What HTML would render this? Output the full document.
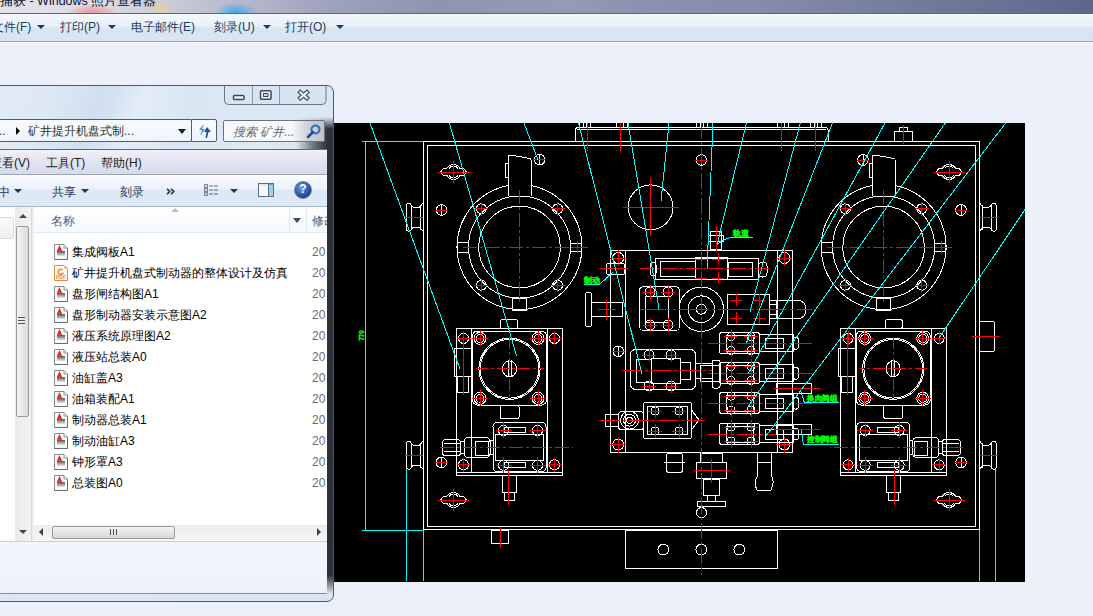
<!DOCTYPE html>
<html><head><meta charset="utf-8">
<style>
*{margin:0;padding:0;box-sizing:border-box}
html,body{width:1093px;height:616px;overflow:hidden}
body{position:relative;background:#ecf1f9;font-family:"Liberation Sans",sans-serif;font-size:12px;color:#000}
.a{position:absolute;white-space:nowrap}
#title{left:0;top:0;width:1093px;height:13px;overflow:hidden;
background:radial-gradient(ellipse 26px 9px at 92px 13px,rgba(235,120,130,.75),rgba(235,120,130,0)),
radial-gradient(ellipse 14px 9px at 160px 9px,rgba(230,215,120,.6),rgba(230,215,120,0)),
radial-gradient(ellipse 22px 10px at 236px 12px,rgba(60,170,235,.95),rgba(60,170,235,0)),
linear-gradient(90deg,#e4e3ea 0%,#dcdbe4 9%,#c9c8d6 16%,#b3b3c8 24%,#9ea2bb 30%,#8f94b0 40%,#959ab6 52%,#8a90ad 60%,#858ba9 70%,#7880a0 80%,#6c7496 90%,#5d668b 100%)}
#tbar{left:0;top:13px;width:1093px;height:29px;
background:linear-gradient(#f3f8fd 0,#e6eff9 13px,#d9e6f2 14px,#d7e4f1 28px);border-top:1px solid #5d6680}
#tline{left:0;top:41px;width:1093px;height:1px;background:#9ba8bd}
#tline2{left:0;top:42px;width:1093px;height:2px;background:#f0f4fa}
.tb{top:20px;color:#1e395b;font-size:12px;line-height:14px}
.arr{width:0;height:0;border-left:4px solid transparent;border-right:4px solid transparent;border-top:4px solid #1e395b}

#exp{left:-20px;top:85px;width:354px;height:517px;border:1px solid #4f5966;border-radius:0 7px 7px 0;overflow:hidden;
 background:linear-gradient(110deg,#e3ecf7 0px,#dde8f4 70px,#d0dff0 115px,#d4e2f1 130px,#e3edf8 155px,#dae6f3 200px,#dfe9f6 280px,#d9e5f2 360px)}
#glass{left:296px;top:117px;width:37px;height:477px;background:linear-gradient(90deg,rgba(28,34,42,0) 0,rgba(28,34,42,.6) 18px,rgba(28,34,42,.92) 31px);-webkit-mask-image:linear-gradient(180deg,transparent 0,#000 12px,#000 458px,transparent 100%)}
#capbtn{left:224px;top:86px;width:104px;height:21px}
.cb{top:0;height:19px;border-right:1px solid #9aa8b8;background:linear-gradient(#e9f1f9,#d3e1ef)}
#addr{left:-20px;top:119px;width:212px;height:23px;border:1px solid #545c66;border-radius:2px;background:linear-gradient(#f8fbfe,#eef4fa)}
#refresh{left:191px;top:119px;width:26px;height:23px;border:1px solid #545c66;border-radius:0 2px 2px 0;background:linear-gradient(#f8fbfe,#eef4fa)}
#search{left:223px;top:120px;width:102px;height:22px;border:1px solid #6a7480;border-radius:2px;background:#f5f8fc;overflow:hidden}
#menubar{left:-20px;top:149px;width:347px;height:26px;border-top:1px solid #5f6a78;border-bottom:1px solid #99a4b4;background:linear-gradient(#f0f1f8 0,#e4e6f2 40%,#d6daea 100%)}
.mb{top:5px;color:#1e1e1e}
#cmdbar{left:-20px;top:175px;width:347px;height:32px;border-bottom:1px solid #a8b8cc;background:linear-gradient(#fafcfe 0,#eaf1f9 45%,#dde8f4 50%,#dfe9f5 100%)}
.cm{top:9px;color:#1e395b}
#content{left:0;top:207px;width:327px;height:334px;background:#fff;overflow:hidden}
#vscroll{left:15px;top:0;width:16px;height:334px;background:linear-gradient(90deg,#e9e9e9,#f3f3f3)}
#colhdr{left:34px;top:0;width:293px;height:26px;border-bottom:1px solid #e5ebf2;background:linear-gradient(#fff,#f5f8fc)}
#hscroll{left:34px;top:318px;width:293px;height:16px;background:linear-gradient(#ececec,#f6f6f6)}
#details{left:-20px;top:541px;width:347px;height:53px;border-top:1px solid #c4d0de;border-bottom:1px solid #8792a0;background:linear-gradient(#f3f6fc,#edf2fa)}
.fn{color:#000;font-size:12px;line-height:15px;margin-top:1px}
.fd{color:#6d6d6d;font-size:12px;line-height:15px;margin-top:1px}
.dwg{width:13px;height:15px;border:1px solid #9b9b9b;background:linear-gradient(160deg,#fff 30%,#ddd 60%,#888 100%)}
.dwg i{position:absolute;left:2px;top:2px;width:6px;height:5px;border-left:1px solid #d22;border-top:1px solid #d22;transform:skewX(-20deg)}
.pdf{width:13px;height:15px;border:1px solid #f08a24;background:#fff7ea;color:#f08a24;font:bold 7px 'Liberation Sans',sans-serif;text-align:center}
.pdf i{position:absolute;left:3px;top:0;font-style:normal;font-size:8px}
.pdf b{position:absolute;left:0;top:8px;font-size:5px;width:11px}
</style></head><body>
<svg width="0" height="0" style="position:absolute"><defs><linearGradient id="gg" x1="0" y1="0" x2="0" y2="1"><stop offset="0" stop-color="#555"/><stop offset="1" stop-color="#e6e6e6"/></linearGradient></defs></svg>
<div id="title" class="a">
  <div class="a" style="left:0;top:-7px;font-size:12.5px;color:#0c1230;">捕获 - Windows 照片查看器</div>
</div>
<div id="tbar" class="a"></div>
<div id="tline" class="a"></div>
<div id="tline2" class="a"></div>
<div class="a tb" style="left:-8px">文件(F)</div><div class="a arr" style="left:37px;top:25px"></div>
<div class="a tb" style="left:60px">打印(P)</div><div class="a arr" style="left:108px;top:25px"></div>
<div class="a tb" style="left:131px">电子邮件(E)</div>
<div class="a tb" style="left:214px">刻录(U)</div><div class="a arr" style="left:263px;top:25px"></div>
<div class="a tb" style="left:285px">打开(O)</div><div class="a arr" style="left:336px;top:25px"></div>

<!-- CAD -->
<svg class="a" style="left:0;top:0" width="1093" height="616" viewBox="0 0 1093 616">
<rect x="333" y="123" width="692" height="459" fill="#000"/>
<g shape-rendering="crispEdges"><rect x="423.5" y="141.5" width="556.0" height="388.0" fill="none" stroke="#ffffff"/>
<rect x="427.5" y="145.5" width="548.0" height="381.0" fill="none" stroke="#ffffff"/>
<path d="M575.5 141.5 V130 Q575.5 127.5 578 127.5 H825.5 Q828 127.5 828 130 V141.5" fill="none" stroke="#ffffff"/>
<line x1="577.0" y1="129.5" x2="826.0" y2="129.5" stroke="#ffffff" stroke-width="1"/>
<line x1="579.5" y1="123.0" x2="579.5" y2="127.5" stroke="#ffffff" stroke-width="1"/>
<line x1="583.2" y1="123.0" x2="583.2" y2="127.5" stroke="#ffffff" stroke-width="1"/>
<line x1="586.9" y1="123.0" x2="586.9" y2="127.5" stroke="#ffffff" stroke-width="1"/>
<line x1="590.6" y1="123.0" x2="590.6" y2="127.5" stroke="#ffffff" stroke-width="1"/>
<line x1="616.5" y1="123.0" x2="616.5" y2="127.5" stroke="#ffffff" stroke-width="1"/>
<line x1="620.2" y1="123.0" x2="620.2" y2="127.5" stroke="#ffffff" stroke-width="1"/>
<line x1="623.9" y1="123.0" x2="623.9" y2="127.5" stroke="#ffffff" stroke-width="1"/>
<line x1="627.6" y1="123.0" x2="627.6" y2="127.5" stroke="#ffffff" stroke-width="1"/>
<line x1="696.5" y1="123.0" x2="696.5" y2="127.5" stroke="#ffffff" stroke-width="1"/>
<line x1="700.2" y1="123.0" x2="700.2" y2="127.5" stroke="#ffffff" stroke-width="1"/>
<line x1="703.9" y1="123.0" x2="703.9" y2="127.5" stroke="#ffffff" stroke-width="1"/>
<line x1="707.6" y1="123.0" x2="707.6" y2="127.5" stroke="#ffffff" stroke-width="1"/>
<line x1="777.5" y1="123.0" x2="777.5" y2="127.5" stroke="#ffffff" stroke-width="1"/>
<line x1="781.2" y1="123.0" x2="781.2" y2="127.5" stroke="#ffffff" stroke-width="1"/>
<line x1="784.9" y1="123.0" x2="784.9" y2="127.5" stroke="#ffffff" stroke-width="1"/>
<line x1="788.6" y1="123.0" x2="788.6" y2="127.5" stroke="#ffffff" stroke-width="1"/>
<line x1="810.5" y1="123.0" x2="810.5" y2="127.5" stroke="#ffffff" stroke-width="1"/>
<line x1="814.2" y1="123.0" x2="814.2" y2="127.5" stroke="#ffffff" stroke-width="1"/>
<line x1="817.9" y1="123.0" x2="817.9" y2="127.5" stroke="#ffffff" stroke-width="1"/>
<line x1="821.6" y1="123.0" x2="821.6" y2="127.5" stroke="#ffffff" stroke-width="1"/>
<line x1="587.5" y1="123.0" x2="587.5" y2="151.0" stroke="#ff0000" stroke-width="1"/>
<line x1="620.5" y1="123.0" x2="620.5" y2="151.0" stroke="#ff0000" stroke-width="1"/>
<line x1="815.5" y1="123.0" x2="815.5" y2="151.0" stroke="#ff0000" stroke-width="1"/>
<line x1="781.5" y1="123.0" x2="781.5" y2="151.0" stroke="#ff0000" stroke-width="1"/>
<rect x="894.5" y="131.5" width="18.0" height="10.0" fill="none" stroke="#ffffff"/>
<rect x="899.5" y="127.5" width="8.0" height="4.0" fill="none" stroke="#ffffff"/>
<line x1="903.5" y1="125.0" x2="903.5" y2="144.0" stroke="#ff0000" stroke-width="1"/>
<path d="M531.0 185.6 A62.5 62.5 0 1 1 508.0 185.6" fill="none" stroke="#ffffff"/>
<circle cx="519.5" cy="247.0" r="51.0" fill="none" stroke="#ffffff"/>
<circle cx="519.5" cy="247.0" r="40.8" fill="none" stroke="#ffffff"/>
<path d="M508.0 196 V155.5 Q508.0 155 510.5 155 L530.0 158.5 Q531.0 158.5 531.0 160 V196" fill="none" stroke="#ffffff"/>
<rect x="505.0" y="163.5" width="3.0" height="14.0" fill="none" stroke="#ffffff"/>
<circle cx="481.3" cy="208.8" r="5.0" fill="none" stroke="#ffffff"/>
<line x1="474.3" y1="208.8" x2="488.3" y2="208.8" stroke="#ff0000" stroke-width="1"/>
<line x1="481.3" y1="201.8" x2="481.3" y2="215.8" stroke="#ff0000" stroke-width="1"/>
<circle cx="481.3" cy="285.2" r="5.0" fill="none" stroke="#ffffff"/>
<line x1="474.3" y1="285.2" x2="488.3" y2="285.2" stroke="#ff0000" stroke-width="1"/>
<line x1="481.3" y1="278.2" x2="481.3" y2="292.2" stroke="#ff0000" stroke-width="1"/>
<circle cx="557.7" cy="208.8" r="5.0" fill="none" stroke="#ffffff"/>
<line x1="550.7" y1="208.8" x2="564.7" y2="208.8" stroke="#ff0000" stroke-width="1"/>
<line x1="557.7" y1="201.8" x2="557.7" y2="215.8" stroke="#ff0000" stroke-width="1"/>
<circle cx="557.7" cy="285.2" r="5.0" fill="none" stroke="#ffffff"/>
<line x1="550.7" y1="285.2" x2="564.7" y2="285.2" stroke="#ff0000" stroke-width="1"/>
<line x1="557.7" y1="278.2" x2="557.7" y2="292.2" stroke="#ff0000" stroke-width="1"/>
<rect x="457.0" y="242.0" width="11.5" height="10.0" fill="none" stroke="#ffffff"/>
<rect x="512.5" y="298.0" width="14.0" height="12.0" fill="none" stroke="#ffffff"/>
<rect x="570.5" y="243.0" width="11.0" height="8.0" fill="none" stroke="#ffffff"/>
<line x1="570.5" y1="247.0" x2="584.5" y2="247.0" stroke="#ff0000" stroke-width="1"/>
<line x1="577.5" y1="241.0" x2="577.5" y2="253.0" stroke="#ff0000" stroke-width="1"/>
<line x1="462.5" y1="247.0" x2="587.5" y2="247.0" stroke="#ff0000" stroke-width="1" stroke-dasharray="14 3 3 3"/>
<line x1="519.5" y1="189.5" x2="519.5" y2="305.0" stroke="#ff0000" stroke-width="1" stroke-dasharray="14 3 3 3"/>
<path d="M895.1 185.6 A62.5 62.5 0 1 1 872.1 185.6" fill="none" stroke="#ffffff"/>
<circle cx="883.6" cy="247.0" r="51.0" fill="none" stroke="#ffffff"/>
<circle cx="883.6" cy="247.0" r="40.8" fill="none" stroke="#ffffff"/>
<path d="M872.1 196 V155.5 Q872.1 155 874.6 155 L894.1 158.5 Q895.1 158.5 895.1 160 V196" fill="none" stroke="#ffffff"/>
<rect x="869.1" y="163.5" width="3.0" height="14.0" fill="none" stroke="#ffffff"/>
<circle cx="845.4" cy="208.8" r="5.0" fill="none" stroke="#ffffff"/>
<line x1="838.4" y1="208.8" x2="852.4" y2="208.8" stroke="#ff0000" stroke-width="1"/>
<line x1="845.4" y1="201.8" x2="845.4" y2="215.8" stroke="#ff0000" stroke-width="1"/>
<circle cx="845.4" cy="285.2" r="5.0" fill="none" stroke="#ffffff"/>
<line x1="838.4" y1="285.2" x2="852.4" y2="285.2" stroke="#ff0000" stroke-width="1"/>
<line x1="845.4" y1="278.2" x2="845.4" y2="292.2" stroke="#ff0000" stroke-width="1"/>
<circle cx="921.8" cy="208.8" r="5.0" fill="none" stroke="#ffffff"/>
<line x1="914.8" y1="208.8" x2="928.8" y2="208.8" stroke="#ff0000" stroke-width="1"/>
<line x1="921.8" y1="201.8" x2="921.8" y2="215.8" stroke="#ff0000" stroke-width="1"/>
<circle cx="921.8" cy="285.2" r="5.0" fill="none" stroke="#ffffff"/>
<line x1="914.8" y1="285.2" x2="928.8" y2="285.2" stroke="#ff0000" stroke-width="1"/>
<line x1="921.8" y1="278.2" x2="921.8" y2="292.2" stroke="#ff0000" stroke-width="1"/>
<rect x="821.1" y="242.0" width="11.5" height="10.0" fill="none" stroke="#ffffff"/>
<rect x="876.6" y="298.0" width="14.0" height="12.0" fill="none" stroke="#ffffff"/>
<rect x="934.6" y="243.0" width="11.0" height="8.0" fill="none" stroke="#ffffff"/>
<line x1="934.6" y1="247.0" x2="948.6" y2="247.0" stroke="#ff0000" stroke-width="1"/>
<line x1="941.6" y1="241.0" x2="941.6" y2="253.0" stroke="#ff0000" stroke-width="1"/>
<line x1="826.6" y1="247.0" x2="951.6" y2="247.0" stroke="#ff0000" stroke-width="1" stroke-dasharray="14 3 3 3"/>
<line x1="883.6" y1="189.5" x2="883.6" y2="305.0" stroke="#ff0000" stroke-width="1" stroke-dasharray="14 3 3 3"/>
<path d="M440.5 172.0 L443.5 168.5 H446.9 A7.5 7.5 0 0 1 460.1 168.5 H463.5 L466.5 172.0 L463.5 175.5 H460.1 A7.5 7.5 0 0 1 446.9 175.5 H443.5 Z" fill="none" stroke="#ffffff"/>
<path d="M449.0 168.5 A5.5 5.5 0 0 1 458.0 168.5 M449.0 175.5 A5.5 5.5 0 0 0 458.0 175.5" fill="none" stroke="#ffffff"/>
<line x1="437.5" y1="172.0" x2="469.5" y2="172.0" stroke="#ff0000" stroke-width="1"/>
<line x1="453.5" y1="161.0" x2="453.5" y2="183.0" stroke="#ff0000" stroke-width="1"/>
<path d="M936.0 172.0 L939.0 168.5 H942.4 A7.5 7.5 0 0 1 955.6 168.5 H959.0 L962.0 172.0 L959.0 175.5 H955.6 A7.5 7.5 0 0 1 942.4 175.5 H939.0 Z" fill="none" stroke="#ffffff"/>
<path d="M944.5 168.5 A5.5 5.5 0 0 1 953.5 168.5 M944.5 175.5 A5.5 5.5 0 0 0 953.5 175.5" fill="none" stroke="#ffffff"/>
<line x1="933.0" y1="172.0" x2="965.0" y2="172.0" stroke="#ff0000" stroke-width="1"/>
<line x1="949.0" y1="161.0" x2="949.0" y2="183.0" stroke="#ff0000" stroke-width="1"/>
<path d="M440.5 500.0 L443.5 496.5 H446.9 A7.5 7.5 0 0 1 460.1 496.5 H463.5 L466.5 500.0 L463.5 503.5 H460.1 A7.5 7.5 0 0 1 446.9 503.5 H443.5 Z" fill="none" stroke="#ffffff"/>
<path d="M449.0 496.5 A5.5 5.5 0 0 1 458.0 496.5 M449.0 503.5 A5.5 5.5 0 0 0 458.0 503.5" fill="none" stroke="#ffffff"/>
<line x1="437.5" y1="500.0" x2="469.5" y2="500.0" stroke="#ff0000" stroke-width="1"/>
<line x1="453.5" y1="489.0" x2="453.5" y2="511.0" stroke="#ff0000" stroke-width="1"/>
<path d="M936.0 500.0 L939.0 496.5 H942.4 A7.5 7.5 0 0 1 955.6 496.5 H959.0 L962.0 500.0 L959.0 503.5 H955.6 A7.5 7.5 0 0 1 942.4 503.5 H939.0 Z" fill="none" stroke="#ffffff"/>
<path d="M944.5 496.5 A5.5 5.5 0 0 1 953.5 496.5 M944.5 503.5 A5.5 5.5 0 0 0 953.5 503.5" fill="none" stroke="#ffffff"/>
<line x1="933.0" y1="500.0" x2="965.0" y2="500.0" stroke="#ff0000" stroke-width="1"/>
<line x1="949.0" y1="489.0" x2="949.0" y2="511.0" stroke="#ff0000" stroke-width="1"/>
<circle cx="441.6" cy="210.0" r="5.3" fill="none" stroke="#ffffff"/>
<line x1="441.6" y1="204.7" x2="441.6" y2="215.3" stroke="#ffffff" stroke-width="1"/>
<line x1="435.3" y1="210.0" x2="447.9" y2="210.0" stroke="#ff0000" stroke-width="1"/>
<circle cx="961.0" cy="210.0" r="5.3" fill="none" stroke="#ffffff"/>
<line x1="961.0" y1="204.7" x2="961.0" y2="215.3" stroke="#ffffff" stroke-width="1"/>
<line x1="954.7" y1="210.0" x2="967.3" y2="210.0" stroke="#ff0000" stroke-width="1"/>
<circle cx="441.3" cy="462.5" r="5.3" fill="none" stroke="#ffffff"/>
<line x1="441.3" y1="457.2" x2="441.3" y2="467.8" stroke="#ffffff" stroke-width="1"/>
<line x1="435.0" y1="462.5" x2="447.6" y2="462.5" stroke="#ff0000" stroke-width="1"/>
<circle cx="961.0" cy="462.5" r="5.3" fill="none" stroke="#ffffff"/>
<line x1="961.0" y1="457.2" x2="961.0" y2="467.8" stroke="#ffffff" stroke-width="1"/>
<line x1="954.7" y1="462.5" x2="967.3" y2="462.5" stroke="#ff0000" stroke-width="1"/>
<circle cx="539.6" cy="159.7" r="5.3" fill="none" stroke="#ffffff"/>
<line x1="539.6" y1="154.4" x2="539.6" y2="165.0" stroke="#ffffff" stroke-width="1"/>
<line x1="533.3" y1="159.7" x2="545.9" y2="159.7" stroke="#ff0000" stroke-width="1"/>
<circle cx="863.0" cy="160.0" r="5.3" fill="none" stroke="#ffffff"/>
<line x1="863.0" y1="154.7" x2="863.0" y2="165.3" stroke="#ffffff" stroke-width="1"/>
<line x1="856.7" y1="160.0" x2="869.3" y2="160.0" stroke="#ff0000" stroke-width="1"/>
<circle cx="701.3" cy="160.0" r="5.3" fill="none" stroke="#ffffff"/>
<line x1="701.3" y1="154.7" x2="701.3" y2="165.3" stroke="#ffffff" stroke-width="1"/>
<line x1="695.0" y1="160.0" x2="707.6" y2="160.0" stroke="#ff0000" stroke-width="1"/>
<circle cx="618.2" cy="351.3" r="5.3" fill="none" stroke="#ffffff"/>
<line x1="618.2" y1="346.0" x2="618.2" y2="356.6" stroke="#ffffff" stroke-width="1"/>
<line x1="611.9" y1="351.3" x2="624.5" y2="351.3" stroke="#ff0000" stroke-width="1"/>
<path d="M406.5 205 Q406.5 203.5 408 203.5 H409.5 Q411 203.5 411 205 V229.5 Q411 231 409.5 231 H408 Q406.5 231 406.5 229.5 Z" fill="none" stroke="#ffffff"/>
<path d="M411 205 Q413 207.5 415 207.5 H418 Q420 207.5 422.5 203.5" fill="none" stroke="#ffffff"/>
<path d="M411 229.5 Q413 227 415 227 H418 Q420 227 422.5 231" fill="none" stroke="#ffffff"/>
<line x1="420.5" y1="205.0" x2="420.5" y2="229.5" stroke="#ffffff"/>
<line x1="405.0" y1="217.5" x2="423.0" y2="217.5" stroke="#ff0000"/>
<path d="M406.5 443 Q406.5 441.5 408 441.5 H409.5 Q411 441.5 411 443 V467.5 Q411 469 409.5 469 H408 Q406.5 469 406.5 467.5 Z" fill="none" stroke="#ffffff"/>
<path d="M411 443 Q413 445.5 415 445.5 H418 Q420 445.5 422.5 441.5" fill="none" stroke="#ffffff"/>
<path d="M411 467.5 Q413 465 415 465 H418 Q420 465 422.5 469" fill="none" stroke="#ffffff"/>
<line x1="420.5" y1="443.0" x2="420.5" y2="467.5" stroke="#ffffff"/>
<line x1="405.0" y1="455.5" x2="423.0" y2="455.5" stroke="#ff0000"/>
<g transform="translate(1976.0 0) scale(-1 1)"><path d="M980.0 205 Q980.0 203.5 981.5 203.5 H983.0 Q984.5 203.5 984.5 205 V229.5 Q984.5 231 983.0 231 H981.5 Q980.0 231 980.0 229.5 Z" fill="none" stroke="#ffffff"/>
<path d="M984.5 205 Q986.5 207.5 988.5 207.5 H991.5 Q993.5 207.5 996.0 203.5" fill="none" stroke="#ffffff"/>
<path d="M984.5 229.5 Q986.5 227 988.5 227 H991.5 Q993.5 227 996.0 231" fill="none" stroke="#ffffff"/>
<line x1="994.0" y1="205.0" x2="994.0" y2="229.5" stroke="#ffffff"/>
<line x1="978.5" y1="217.5" x2="996.5" y2="217.5" stroke="#ff0000"/></g>
<g transform="translate(1976.0 0) scale(-1 1)"><path d="M980.0 443 Q980.0 441.5 981.5 441.5 H983.0 Q984.5 441.5 984.5 443 V467.5 Q984.5 469 983.0 469 H981.5 Q980.0 469 980.0 467.5 Z" fill="none" stroke="#ffffff"/>
<path d="M984.5 443 Q986.5 445.5 988.5 445.5 H991.5 Q993.5 445.5 996.0 441.5" fill="none" stroke="#ffffff"/>
<path d="M984.5 467.5 Q986.5 465 988.5 465 H991.5 Q993.5 465 996.0 469" fill="none" stroke="#ffffff"/>
<line x1="994.0" y1="443.0" x2="994.0" y2="467.5" stroke="#ffffff"/>
<line x1="978.5" y1="455.5" x2="996.5" y2="455.5" stroke="#ff0000"/></g>
<rect x="979.5" y="321.5" width="15.0" height="30.0" fill="none" stroke="#ffffff" rx="2"/>
<line x1="972.0" y1="336.5" x2="1000.0" y2="336.5" stroke="#ff0000" stroke-width="1"/>
<rect x="491.5" y="530.5" width="17.0" height="13.0" fill="none" stroke="#ffffff"/>
<line x1="500.5" y1="527.0" x2="500.5" y2="548.0" stroke="#ff0000" stroke-width="1"/>
<circle cx="650.6" cy="207.3" r="22.4" fill="none" stroke="#ffffff"/>
<line x1="622.6" y1="207.3" x2="678.6" y2="207.3" stroke="#ff0000" stroke-width="1"/>
<line x1="650.6" y1="178.3" x2="650.6" y2="236.3" stroke="#ff0000" stroke-width="1"/>
<rect x="456.5" y="328.5" width="106.0" height="147.0" fill="none" stroke="#ffffff"/>
<line x1="456.5" y1="472.5" x2="562.5" y2="472.5" stroke="#ffffff" stroke-width="1"/>
<line x1="471.5" y1="328.5" x2="471.5" y2="472.5" stroke="#ffffff" stroke-width="1"/>
<line x1="547.5" y1="328.5" x2="547.5" y2="472.5" stroke="#ffffff" stroke-width="1"/>
<rect x="472.5" y="331.0" width="74.0" height="74.0" fill="none" stroke="#ffffff" rx="5"/>
<circle cx="509.5" cy="368.8" r="30.6" fill="none" stroke="#ffffff"/>
<circle cx="509.5" cy="368.8" r="29.3" fill="none" stroke="#ffffff"/>
<ellipse cx="509.5" cy="368.8" rx="7" ry="8" fill="none" stroke="#ffffff"/>
<line x1="508.0" y1="360.0" x2="508.0" y2="377.0" stroke="#ffffff" stroke-width="1"/>
<line x1="511.0" y1="360.0" x2="511.0" y2="377.0" stroke="#ffffff" stroke-width="1"/>
<line x1="475.5" y1="368.8" x2="543.5" y2="368.8" stroke="#ff0000" stroke-width="1" stroke-dasharray="12 3 3 3"/>
<line x1="509.5" y1="337.0" x2="509.5" y2="400.0" stroke="#ff0000" stroke-width="1" stroke-dasharray="12 3 3 3"/>
<circle cx="480.0" cy="338.4" r="6.0" fill="none" stroke="#ffffff"/>
<circle cx="480.0" cy="338.4" r="4.0" fill="none" stroke="#ffffff"/>
<line x1="472.0" y1="338.4" x2="488.0" y2="338.4" stroke="#ff0000" stroke-width="1"/>
<line x1="480.0" y1="330.4" x2="480.0" y2="346.4" stroke="#ff0000" stroke-width="1"/>
<circle cx="480.0" cy="398.3" r="6.0" fill="none" stroke="#ffffff"/>
<circle cx="480.0" cy="398.3" r="4.0" fill="none" stroke="#ffffff"/>
<line x1="472.0" y1="398.3" x2="488.0" y2="398.3" stroke="#ff0000" stroke-width="1"/>
<line x1="480.0" y1="390.3" x2="480.0" y2="406.3" stroke="#ff0000" stroke-width="1"/>
<circle cx="538.0" cy="338.4" r="6.0" fill="none" stroke="#ffffff"/>
<circle cx="538.0" cy="338.4" r="4.0" fill="none" stroke="#ffffff"/>
<line x1="530.0" y1="338.4" x2="546.0" y2="338.4" stroke="#ff0000" stroke-width="1"/>
<line x1="538.0" y1="330.4" x2="538.0" y2="346.4" stroke="#ff0000" stroke-width="1"/>
<circle cx="538.0" cy="398.3" r="6.0" fill="none" stroke="#ffffff"/>
<circle cx="538.0" cy="398.3" r="4.0" fill="none" stroke="#ffffff"/>
<line x1="530.0" y1="398.3" x2="546.0" y2="398.3" stroke="#ff0000" stroke-width="1"/>
<line x1="538.0" y1="390.3" x2="538.0" y2="406.3" stroke="#ff0000" stroke-width="1"/>
<circle cx="463.5" cy="338.4" r="5.0" fill="none" stroke="#ffffff"/>
<line x1="456.5" y1="338.4" x2="470.5" y2="338.4" stroke="#ff0000" stroke-width="1"/>
<line x1="463.5" y1="331.4" x2="463.5" y2="345.4" stroke="#ff0000" stroke-width="1"/>
<circle cx="463.5" cy="464.8" r="5.0" fill="none" stroke="#ffffff"/>
<line x1="456.5" y1="464.8" x2="470.5" y2="464.8" stroke="#ff0000" stroke-width="1"/>
<line x1="463.5" y1="457.8" x2="463.5" y2="471.8" stroke="#ff0000" stroke-width="1"/>
<circle cx="554.5" cy="338.4" r="5.0" fill="none" stroke="#ffffff"/>
<line x1="547.5" y1="338.4" x2="561.5" y2="338.4" stroke="#ff0000" stroke-width="1"/>
<line x1="554.5" y1="331.4" x2="554.5" y2="345.4" stroke="#ff0000" stroke-width="1"/>
<circle cx="554.5" cy="464.8" r="5.0" fill="none" stroke="#ffffff"/>
<line x1="547.5" y1="464.8" x2="561.5" y2="464.8" stroke="#ff0000" stroke-width="1"/>
<line x1="554.5" y1="457.8" x2="554.5" y2="471.8" stroke="#ff0000" stroke-width="1"/>
<rect x="500.5" y="319.5" width="17.0" height="9.0" fill="none" stroke="#ffffff" rx="2"/>
<rect x="500.0" y="405.0" width="19.0" height="13.5" fill="none" stroke="#ffffff" rx="2"/>
<rect x="454.5" y="348.5" width="17.0" height="28.0" fill="none" stroke="#ffffff"/>
<rect x="457.5" y="376.5" width="11.0" height="15.5" fill="none" stroke="#ffffff"/>
<line x1="463.5" y1="334.0" x2="463.5" y2="395.0" stroke="#ff0000" stroke-width="1"/>
<rect x="493.0" y="422.5" width="53.0" height="49.0" fill="none" stroke="#ffffff" rx="4"/>
<rect x="495.5" y="434.0" width="48.0" height="26.0" fill="none" stroke="#ffffff"/>
<rect x="504.5" y="427.0" width="21.0" height="5.0" fill="none" stroke="#ffffff"/>
<rect x="504.5" y="462.0" width="21.0" height="5.0" fill="none" stroke="#ffffff"/>
<rect x="442.5" y="439.5" width="18.0" height="16.0" fill="none" stroke="#ffffff" rx="3"/>
<line x1="443.5" y1="443.5" x2="459.5" y2="443.5" stroke="#ffffff" stroke-width="1"/>
<line x1="443.5" y1="451.5" x2="459.5" y2="451.5" stroke="#ffffff" stroke-width="1"/>
<rect x="460.5" y="441.5" width="3.5" height="12.0" fill="none" stroke="#ffffff"/>
<rect x="464.0" y="437.5" width="26.0" height="20.0" fill="none" stroke="#ffffff" rx="4"/>
<rect x="475.0" y="441.5" width="13.0" height="14.0" fill="none" stroke="#ffffff"/>
<rect x="490.0" y="440.5" width="3.0" height="14.0" fill="none" stroke="#ffffff"/>
<circle cx="503.5" cy="430.4" r="5.0" fill="none" stroke="#ffffff"/>
<line x1="495.5" y1="430.4" x2="511.5" y2="430.4" stroke="#ff0000" stroke-width="1"/>
<line x1="503.5" y1="422.4" x2="503.5" y2="438.4" stroke="#ff0000" stroke-width="1"/>
<circle cx="503.5" cy="465.3" r="5.0" fill="none" stroke="#ffffff"/>
<line x1="495.5" y1="465.3" x2="511.5" y2="465.3" stroke="#ff0000" stroke-width="1"/>
<line x1="503.5" y1="457.3" x2="503.5" y2="473.3" stroke="#ff0000" stroke-width="1"/>
<circle cx="537.5" cy="430.4" r="5.0" fill="none" stroke="#ffffff"/>
<line x1="529.5" y1="430.4" x2="545.5" y2="430.4" stroke="#ff0000" stroke-width="1"/>
<line x1="537.5" y1="422.4" x2="537.5" y2="438.4" stroke="#ff0000" stroke-width="1"/>
<circle cx="537.5" cy="465.3" r="5.0" fill="none" stroke="#ffffff"/>
<line x1="529.5" y1="465.3" x2="545.5" y2="465.3" stroke="#ff0000" stroke-width="1"/>
<line x1="537.5" y1="457.3" x2="537.5" y2="473.3" stroke="#ff0000" stroke-width="1"/>
<line x1="439.5" y1="447.5" x2="572.5" y2="447.5" stroke="#ff0000" stroke-width="1" stroke-dasharray="14 3 3 3"/>
<rect x="502.5" y="475.5" width="13.5" height="16.5" fill="none" stroke="#ffffff"/>
<rect x="504.5" y="492.0" width="10.0" height="8.0" fill="none" stroke="#ffffff"/>
<line x1="508.5" y1="470.0" x2="508.5" y2="505.0" stroke="#ff0000" stroke-width="1"/>
<rect x="840.2" y="328.5" width="106.0" height="147.0" fill="none" stroke="#ffffff"/>
<line x1="946.2" y1="472.5" x2="840.2" y2="472.5" stroke="#ffffff" stroke-width="1"/>
<line x1="931.2" y1="328.5" x2="931.2" y2="472.5" stroke="#ffffff" stroke-width="1"/>
<line x1="855.2" y1="328.5" x2="855.2" y2="472.5" stroke="#ffffff" stroke-width="1"/>
<rect x="856.2" y="331.0" width="74.0" height="74.0" fill="none" stroke="#ffffff" rx="5"/>
<circle cx="893.2" cy="368.8" r="30.6" fill="none" stroke="#ffffff"/>
<circle cx="893.2" cy="368.8" r="29.3" fill="none" stroke="#ffffff"/>
<ellipse cx="893.2" cy="368.8" rx="7" ry="8" fill="none" stroke="#ffffff"/>
<line x1="894.7" y1="360.0" x2="894.7" y2="377.0" stroke="#ffffff" stroke-width="1"/>
<line x1="891.7" y1="360.0" x2="891.7" y2="377.0" stroke="#ffffff" stroke-width="1"/>
<line x1="927.2" y1="368.8" x2="859.2" y2="368.8" stroke="#ff0000" stroke-width="1" stroke-dasharray="12 3 3 3"/>
<line x1="893.2" y1="337.0" x2="893.2" y2="400.0" stroke="#ff0000" stroke-width="1" stroke-dasharray="12 3 3 3"/>
<circle cx="922.7" cy="338.4" r="6.0" fill="none" stroke="#ffffff"/>
<circle cx="922.7" cy="338.4" r="4.0" fill="none" stroke="#ffffff"/>
<line x1="914.7" y1="338.4" x2="930.7" y2="338.4" stroke="#ff0000" stroke-width="1"/>
<line x1="922.7" y1="330.4" x2="922.7" y2="346.4" stroke="#ff0000" stroke-width="1"/>
<circle cx="922.7" cy="398.3" r="6.0" fill="none" stroke="#ffffff"/>
<circle cx="922.7" cy="398.3" r="4.0" fill="none" stroke="#ffffff"/>
<line x1="914.7" y1="398.3" x2="930.7" y2="398.3" stroke="#ff0000" stroke-width="1"/>
<line x1="922.7" y1="390.3" x2="922.7" y2="406.3" stroke="#ff0000" stroke-width="1"/>
<circle cx="864.7" cy="338.4" r="6.0" fill="none" stroke="#ffffff"/>
<circle cx="864.7" cy="338.4" r="4.0" fill="none" stroke="#ffffff"/>
<line x1="856.7" y1="338.4" x2="872.7" y2="338.4" stroke="#ff0000" stroke-width="1"/>
<line x1="864.7" y1="330.4" x2="864.7" y2="346.4" stroke="#ff0000" stroke-width="1"/>
<circle cx="864.7" cy="398.3" r="6.0" fill="none" stroke="#ffffff"/>
<circle cx="864.7" cy="398.3" r="4.0" fill="none" stroke="#ffffff"/>
<line x1="856.7" y1="398.3" x2="872.7" y2="398.3" stroke="#ff0000" stroke-width="1"/>
<line x1="864.7" y1="390.3" x2="864.7" y2="406.3" stroke="#ff0000" stroke-width="1"/>
<circle cx="939.2" cy="338.4" r="5.0" fill="none" stroke="#ffffff"/>
<line x1="932.2" y1="338.4" x2="946.2" y2="338.4" stroke="#ff0000" stroke-width="1"/>
<line x1="939.2" y1="331.4" x2="939.2" y2="345.4" stroke="#ff0000" stroke-width="1"/>
<circle cx="939.2" cy="464.8" r="5.0" fill="none" stroke="#ffffff"/>
<line x1="932.2" y1="464.8" x2="946.2" y2="464.8" stroke="#ff0000" stroke-width="1"/>
<line x1="939.2" y1="457.8" x2="939.2" y2="471.8" stroke="#ff0000" stroke-width="1"/>
<circle cx="848.2" cy="338.4" r="5.0" fill="none" stroke="#ffffff"/>
<line x1="841.2" y1="338.4" x2="855.2" y2="338.4" stroke="#ff0000" stroke-width="1"/>
<line x1="848.2" y1="331.4" x2="848.2" y2="345.4" stroke="#ff0000" stroke-width="1"/>
<circle cx="848.2" cy="464.8" r="5.0" fill="none" stroke="#ffffff"/>
<line x1="841.2" y1="464.8" x2="855.2" y2="464.8" stroke="#ff0000" stroke-width="1"/>
<line x1="848.2" y1="457.8" x2="848.2" y2="471.8" stroke="#ff0000" stroke-width="1"/>
<rect x="885.2" y="319.5" width="17.0" height="9.0" fill="none" stroke="#ffffff" rx="2"/>
<rect x="883.7" y="405.0" width="19.0" height="13.5" fill="none" stroke="#ffffff" rx="2"/>
<rect x="838.2" y="348.5" width="17.0" height="28.0" fill="none" stroke="#ffffff"/>
<rect x="841.2" y="376.5" width="11.0" height="15.5" fill="none" stroke="#ffffff"/>
<line x1="847.2" y1="334.0" x2="847.2" y2="395.0" stroke="#ff0000" stroke-width="1"/>
<rect x="856.7" y="422.5" width="53.0" height="49.0" fill="none" stroke="#ffffff" rx="4"/>
<rect x="859.2" y="434.0" width="48.0" height="26.0" fill="none" stroke="#ffffff"/>
<rect x="877.2" y="427.0" width="21.0" height="5.0" fill="none" stroke="#ffffff"/>
<rect x="877.2" y="462.0" width="21.0" height="5.0" fill="none" stroke="#ffffff"/>
<rect x="942.2" y="439.5" width="18.0" height="16.0" fill="none" stroke="#ffffff" rx="3"/>
<line x1="959.2" y1="443.5" x2="943.2" y2="443.5" stroke="#ffffff" stroke-width="1"/>
<line x1="959.2" y1="451.5" x2="943.2" y2="451.5" stroke="#ffffff" stroke-width="1"/>
<rect x="938.7" y="441.5" width="3.5" height="12.0" fill="none" stroke="#ffffff"/>
<rect x="912.7" y="437.5" width="26.0" height="20.0" fill="none" stroke="#ffffff" rx="4"/>
<rect x="914.7" y="441.5" width="13.0" height="14.0" fill="none" stroke="#ffffff"/>
<rect x="909.7" y="440.5" width="3.0" height="14.0" fill="none" stroke="#ffffff"/>
<circle cx="899.2" cy="430.4" r="5.0" fill="none" stroke="#ffffff"/>
<line x1="891.2" y1="430.4" x2="907.2" y2="430.4" stroke="#ff0000" stroke-width="1"/>
<line x1="899.2" y1="422.4" x2="899.2" y2="438.4" stroke="#ff0000" stroke-width="1"/>
<circle cx="899.2" cy="465.3" r="5.0" fill="none" stroke="#ffffff"/>
<line x1="891.2" y1="465.3" x2="907.2" y2="465.3" stroke="#ff0000" stroke-width="1"/>
<line x1="899.2" y1="457.3" x2="899.2" y2="473.3" stroke="#ff0000" stroke-width="1"/>
<circle cx="865.2" cy="430.4" r="5.0" fill="none" stroke="#ffffff"/>
<line x1="857.2" y1="430.4" x2="873.2" y2="430.4" stroke="#ff0000" stroke-width="1"/>
<line x1="865.2" y1="422.4" x2="865.2" y2="438.4" stroke="#ff0000" stroke-width="1"/>
<circle cx="865.2" cy="465.3" r="5.0" fill="none" stroke="#ffffff"/>
<line x1="857.2" y1="465.3" x2="873.2" y2="465.3" stroke="#ff0000" stroke-width="1"/>
<line x1="865.2" y1="457.3" x2="865.2" y2="473.3" stroke="#ff0000" stroke-width="1"/>
<line x1="963.2" y1="447.5" x2="830.2" y2="447.5" stroke="#ff0000" stroke-width="1" stroke-dasharray="14 3 3 3"/>
<rect x="886.7" y="475.5" width="13.5" height="16.5" fill="none" stroke="#ffffff"/>
<rect x="888.2" y="492.0" width="10.0" height="8.0" fill="none" stroke="#ffffff"/>
<line x1="894.2" y1="470.0" x2="894.2" y2="505.0" stroke="#ff0000" stroke-width="1"/>
<rect x="610.5" y="250.5" width="182.0" height="202.0" fill="none" stroke="#ffffff"/>
<line x1="625.5" y1="250.5" x2="625.5" y2="452.5" stroke="#ffffff" stroke-width="1"/>
<line x1="777.5" y1="250.5" x2="777.5" y2="452.5" stroke="#ffffff" stroke-width="1"/>
<circle cx="618.2" cy="258.0" r="5.5" fill="none" stroke="#ffffff"/>
<line x1="610.2" y1="258.0" x2="626.2" y2="258.0" stroke="#ff0000" stroke-width="1"/>
<line x1="618.2" y1="250.0" x2="618.2" y2="266.0" stroke="#ff0000" stroke-width="1"/>
<circle cx="784.4" cy="258.0" r="5.5" fill="none" stroke="#ffffff"/>
<line x1="776.4" y1="258.0" x2="792.4" y2="258.0" stroke="#ff0000" stroke-width="1"/>
<line x1="784.4" y1="250.0" x2="784.4" y2="266.0" stroke="#ff0000" stroke-width="1"/>
<circle cx="618.2" cy="444.5" r="5.5" fill="none" stroke="#ffffff"/>
<line x1="610.2" y1="444.5" x2="626.2" y2="444.5" stroke="#ff0000" stroke-width="1"/>
<line x1="618.2" y1="436.5" x2="618.2" y2="452.5" stroke="#ff0000" stroke-width="1"/>
<circle cx="784.4" cy="444.5" r="5.5" fill="none" stroke="#ffffff"/>
<line x1="776.4" y1="444.5" x2="792.4" y2="444.5" stroke="#ff0000" stroke-width="1"/>
<line x1="784.4" y1="436.5" x2="784.4" y2="452.5" stroke="#ff0000" stroke-width="1"/>
<rect x="606.5" y="263.5" width="18.0" height="11.0" fill="none" stroke="#ffffff" rx="2"/>
<line x1="600.0" y1="268.5" x2="628.0" y2="268.5" stroke="#ff0000" stroke-width="1"/>
<rect x="591.5" y="302.5" width="31.0" height="14.0" fill="none" stroke="#ffffff"/>
<rect x="585.5" y="292.5" width="6.0" height="34.0" fill="none" stroke="#ffffff" rx="2"/>
<line x1="597.5" y1="309.5" x2="615.5" y2="309.5" stroke="#ff0000" stroke-width="1"/>
<line x1="606.5" y1="299.5" x2="606.5" y2="319.5" stroke="#ff0000" stroke-width="1"/>
<path d="M655.5 258.5 H758.5 V279.5 H655.5 Z" fill="none" stroke="#ffffff"/>
<rect x="660.5" y="261.5" width="35.0" height="15.0" fill="none" stroke="#ffffff"/>
<rect x="695.5" y="257.5" width="32.0" height="22.0" fill="none" stroke="#ffffff"/>
<rect x="728.5" y="262.5" width="24.0" height="14.0" fill="none" stroke="#ffffff"/>
<rect x="758.5" y="262.0" width="8.5" height="15.0" fill="none" stroke="#ffffff" rx="4"/>
<rect x="650.5" y="262.0" width="5.5" height="14.0" fill="none" stroke="#ffffff" rx="3"/>
<line x1="640.0" y1="268.5" x2="770.0" y2="268.5" stroke="#ff0000" stroke-width="1" stroke-dasharray="14 3 3 3"/>
<line x1="695.0" y1="259.0" x2="707.0" y2="259.0" stroke="#ff0000" stroke-width="1"/>
<line x1="701.0" y1="253.0" x2="701.0" y2="265.0" stroke="#ff0000" stroke-width="1"/>
<line x1="712.0" y1="259.0" x2="724.0" y2="259.0" stroke="#ff0000" stroke-width="1"/>
<line x1="718.0" y1="253.0" x2="718.0" y2="265.0" stroke="#ff0000" stroke-width="1"/>
<line x1="695.0" y1="278.0" x2="707.0" y2="278.0" stroke="#ff0000" stroke-width="1"/>
<line x1="701.0" y1="272.0" x2="701.0" y2="284.0" stroke="#ff0000" stroke-width="1"/>
<line x1="712.0" y1="278.0" x2="724.0" y2="278.0" stroke="#ff0000" stroke-width="1"/>
<line x1="718.0" y1="272.0" x2="718.0" y2="284.0" stroke="#ff0000" stroke-width="1"/>
<rect x="710.5" y="231.5" width="11.0" height="18.0" fill="none" stroke="#ffffff"/>
<rect x="708.5" y="235.5" width="15.0" height="6.0" fill="none" stroke="#ffffff"/>
<line x1="716.0" y1="226.0" x2="716.0" y2="252.0" stroke="#ff0000" stroke-width="1"/>
<rect x="639.5" y="286.5" width="40.0" height="44.0" fill="none" stroke="#ffffff" rx="4"/>
<rect x="645.5" y="296.5" width="22.5" height="26.0" fill="none" stroke="#ffffff"/>
<line x1="668.0" y1="290.0" x2="668.0" y2="328.0" stroke="#ffffff" stroke-width="1"/>
<circle cx="650.0" cy="292.0" r="5.0" fill="none" stroke="#ffffff"/>
<line x1="643.0" y1="292.0" x2="657.0" y2="292.0" stroke="#ff0000" stroke-width="1"/>
<line x1="650.0" y1="285.0" x2="650.0" y2="299.0" stroke="#ff0000" stroke-width="1"/>
<circle cx="668.0" cy="292.0" r="5.0" fill="none" stroke="#ffffff"/>
<line x1="661.0" y1="292.0" x2="675.0" y2="292.0" stroke="#ff0000" stroke-width="1"/>
<line x1="668.0" y1="285.0" x2="668.0" y2="299.0" stroke="#ff0000" stroke-width="1"/>
<circle cx="650.0" cy="325.0" r="5.0" fill="none" stroke="#ffffff"/>
<line x1="643.0" y1="325.0" x2="657.0" y2="325.0" stroke="#ff0000" stroke-width="1"/>
<line x1="650.0" y1="318.0" x2="650.0" y2="332.0" stroke="#ff0000" stroke-width="1"/>
<circle cx="668.0" cy="325.0" r="5.0" fill="none" stroke="#ffffff"/>
<line x1="661.0" y1="325.0" x2="675.0" y2="325.0" stroke="#ff0000" stroke-width="1"/>
<line x1="668.0" y1="318.0" x2="668.0" y2="332.0" stroke="#ff0000" stroke-width="1"/>
<circle cx="701.3" cy="309.2" r="22.2" fill="none" stroke="#ffffff"/>
<circle cx="701.3" cy="309.2" r="13.3" fill="none" stroke="#ffffff"/>
<circle cx="701.3" cy="309.2" r="5.0" fill="none" stroke="#ffffff"/>
<rect x="727.5" y="294.5" width="42.0" height="30.0" fill="none" stroke="#ffffff"/>
<path d="M769.5 300.5 H797 Q806 300.5 806 309.5 Q806 318.5 797 318.5 H769.5" fill="none" stroke="#ffffff"/>
<line x1="776.0" y1="300.5" x2="776.0" y2="318.5" stroke="#ffffff" stroke-width="1"/>
<line x1="769.5" y1="304.5" x2="776.0" y2="304.5" stroke="#ffffff" stroke-width="1"/>
<line x1="769.5" y1="314.5" x2="776.0" y2="314.5" stroke="#ffffff" stroke-width="1"/>
<line x1="730.0" y1="300.0" x2="742.0" y2="300.0" stroke="#ff0000" stroke-width="1"/>
<line x1="736.0" y1="294.0" x2="736.0" y2="306.0" stroke="#ff0000" stroke-width="1"/>
<line x1="753.0" y1="300.0" x2="765.0" y2="300.0" stroke="#ff0000" stroke-width="1"/>
<line x1="759.0" y1="294.0" x2="759.0" y2="306.0" stroke="#ff0000" stroke-width="1"/>
<line x1="730.0" y1="318.0" x2="742.0" y2="318.0" stroke="#ff0000" stroke-width="1"/>
<line x1="736.0" y1="312.0" x2="736.0" y2="324.0" stroke="#ff0000" stroke-width="1"/>
<line x1="753.0" y1="318.0" x2="765.0" y2="318.0" stroke="#ff0000" stroke-width="1"/>
<line x1="759.0" y1="312.0" x2="759.0" y2="324.0" stroke="#ff0000" stroke-width="1"/>
<line x1="640.0" y1="309.5" x2="812.0" y2="309.5" stroke="#ff0000" stroke-width="1" stroke-dasharray="30 3 3 3"/>
<rect x="719.5" y="332.4" width="40.0" height="21.5" fill="none" stroke="#ffffff" rx="3"/>
<rect x="726.5" y="335.4" width="26.5" height="16.0" fill="none" stroke="#ffffff"/>
<rect x="759.5" y="334.9" width="33.5" height="17.0" fill="none" stroke="#ffffff"/>
<rect x="765.0" y="338.4" width="18.0" height="10.0" fill="none" stroke="#ffffff"/>
<rect x="793.0" y="337.4" width="5.5" height="12.0" fill="none" stroke="#ffffff" rx="3"/>
<circle cx="731.0" cy="336.4" r="4.0" fill="none" stroke="#ffffff"/>
<line x1="724.0" y1="336.4" x2="738.0" y2="336.4" stroke="#ff0000" stroke-width="1"/>
<line x1="731.0" y1="329.4" x2="731.0" y2="343.4" stroke="#ff0000" stroke-width="1"/>
<circle cx="731.0" cy="350.4" r="4.0" fill="none" stroke="#ffffff"/>
<line x1="724.0" y1="350.4" x2="738.0" y2="350.4" stroke="#ff0000" stroke-width="1"/>
<line x1="731.0" y1="343.4" x2="731.0" y2="357.4" stroke="#ff0000" stroke-width="1"/>
<circle cx="751.0" cy="336.4" r="4.0" fill="none" stroke="#ffffff"/>
<line x1="744.0" y1="336.4" x2="758.0" y2="336.4" stroke="#ff0000" stroke-width="1"/>
<line x1="751.0" y1="329.4" x2="751.0" y2="343.4" stroke="#ff0000" stroke-width="1"/>
<circle cx="751.0" cy="350.4" r="4.0" fill="none" stroke="#ffffff"/>
<line x1="744.0" y1="350.4" x2="758.0" y2="350.4" stroke="#ff0000" stroke-width="1"/>
<line x1="751.0" y1="343.4" x2="751.0" y2="357.4" stroke="#ff0000" stroke-width="1"/>
<line x1="708.0" y1="343.4" x2="812.0" y2="343.4" stroke="#ff0000" stroke-width="1" stroke-dasharray="20 3 3 3"/>
<rect x="719.5" y="362.4" width="40.0" height="21.5" fill="none" stroke="#ffffff" rx="3"/>
<rect x="726.5" y="365.4" width="26.5" height="16.0" fill="none" stroke="#ffffff"/>
<rect x="759.5" y="364.9" width="33.5" height="17.0" fill="none" stroke="#ffffff"/>
<rect x="765.0" y="368.4" width="18.0" height="10.0" fill="none" stroke="#ffffff"/>
<rect x="793.0" y="367.4" width="5.5" height="12.0" fill="none" stroke="#ffffff" rx="3"/>
<circle cx="731.0" cy="366.4" r="4.0" fill="none" stroke="#ffffff"/>
<line x1="724.0" y1="366.4" x2="738.0" y2="366.4" stroke="#ff0000" stroke-width="1"/>
<line x1="731.0" y1="359.4" x2="731.0" y2="373.4" stroke="#ff0000" stroke-width="1"/>
<circle cx="731.0" cy="380.4" r="4.0" fill="none" stroke="#ffffff"/>
<line x1="724.0" y1="380.4" x2="738.0" y2="380.4" stroke="#ff0000" stroke-width="1"/>
<line x1="731.0" y1="373.4" x2="731.0" y2="387.4" stroke="#ff0000" stroke-width="1"/>
<circle cx="751.0" cy="366.4" r="4.0" fill="none" stroke="#ffffff"/>
<line x1="744.0" y1="366.4" x2="758.0" y2="366.4" stroke="#ff0000" stroke-width="1"/>
<line x1="751.0" y1="359.4" x2="751.0" y2="373.4" stroke="#ff0000" stroke-width="1"/>
<circle cx="751.0" cy="380.4" r="4.0" fill="none" stroke="#ffffff"/>
<line x1="744.0" y1="380.4" x2="758.0" y2="380.4" stroke="#ff0000" stroke-width="1"/>
<line x1="751.0" y1="373.4" x2="751.0" y2="387.4" stroke="#ff0000" stroke-width="1"/>
<line x1="708.0" y1="373.4" x2="812.0" y2="373.4" stroke="#ff0000" stroke-width="1" stroke-dasharray="20 3 3 3"/>
<rect x="719.5" y="392.2" width="40.0" height="21.5" fill="none" stroke="#ffffff" rx="3"/>
<rect x="726.5" y="395.2" width="26.5" height="16.0" fill="none" stroke="#ffffff"/>
<rect x="759.5" y="394.7" width="33.5" height="17.0" fill="none" stroke="#ffffff"/>
<rect x="765.0" y="398.2" width="18.0" height="10.0" fill="none" stroke="#ffffff"/>
<rect x="793.0" y="397.2" width="5.5" height="12.0" fill="none" stroke="#ffffff" rx="3"/>
<circle cx="731.0" cy="396.2" r="4.0" fill="none" stroke="#ffffff"/>
<line x1="724.0" y1="396.2" x2="738.0" y2="396.2" stroke="#ff0000" stroke-width="1"/>
<line x1="731.0" y1="389.2" x2="731.0" y2="403.2" stroke="#ff0000" stroke-width="1"/>
<circle cx="731.0" cy="410.2" r="4.0" fill="none" stroke="#ffffff"/>
<line x1="724.0" y1="410.2" x2="738.0" y2="410.2" stroke="#ff0000" stroke-width="1"/>
<line x1="731.0" y1="403.2" x2="731.0" y2="417.2" stroke="#ff0000" stroke-width="1"/>
<circle cx="751.0" cy="396.2" r="4.0" fill="none" stroke="#ffffff"/>
<line x1="744.0" y1="396.2" x2="758.0" y2="396.2" stroke="#ff0000" stroke-width="1"/>
<line x1="751.0" y1="389.2" x2="751.0" y2="403.2" stroke="#ff0000" stroke-width="1"/>
<circle cx="751.0" cy="410.2" r="4.0" fill="none" stroke="#ffffff"/>
<line x1="744.0" y1="410.2" x2="758.0" y2="410.2" stroke="#ff0000" stroke-width="1"/>
<line x1="751.0" y1="403.2" x2="751.0" y2="417.2" stroke="#ff0000" stroke-width="1"/>
<line x1="708.0" y1="403.2" x2="812.0" y2="403.2" stroke="#ff0000" stroke-width="1" stroke-dasharray="20 3 3 3"/>
<rect x="719.5" y="423.0" width="40.0" height="21.5" fill="none" stroke="#ffffff" rx="3"/>
<rect x="726.5" y="426.0" width="26.5" height="16.0" fill="none" stroke="#ffffff"/>
<rect x="759.5" y="425.5" width="33.5" height="17.0" fill="none" stroke="#ffffff"/>
<rect x="765.0" y="429.0" width="18.0" height="10.0" fill="none" stroke="#ffffff"/>
<rect x="793.0" y="428.0" width="5.5" height="12.0" fill="none" stroke="#ffffff" rx="3"/>
<circle cx="731.0" cy="427.0" r="4.0" fill="none" stroke="#ffffff"/>
<line x1="724.0" y1="427.0" x2="738.0" y2="427.0" stroke="#ff0000" stroke-width="1"/>
<line x1="731.0" y1="420.0" x2="731.0" y2="434.0" stroke="#ff0000" stroke-width="1"/>
<circle cx="731.0" cy="441.0" r="4.0" fill="none" stroke="#ffffff"/>
<line x1="724.0" y1="441.0" x2="738.0" y2="441.0" stroke="#ff0000" stroke-width="1"/>
<line x1="731.0" y1="434.0" x2="731.0" y2="448.0" stroke="#ff0000" stroke-width="1"/>
<circle cx="751.0" cy="427.0" r="4.0" fill="none" stroke="#ffffff"/>
<line x1="744.0" y1="427.0" x2="758.0" y2="427.0" stroke="#ff0000" stroke-width="1"/>
<line x1="751.0" y1="420.0" x2="751.0" y2="434.0" stroke="#ff0000" stroke-width="1"/>
<circle cx="751.0" cy="441.0" r="4.0" fill="none" stroke="#ffffff"/>
<line x1="744.0" y1="441.0" x2="758.0" y2="441.0" stroke="#ff0000" stroke-width="1"/>
<line x1="751.0" y1="434.0" x2="751.0" y2="448.0" stroke="#ff0000" stroke-width="1"/>
<line x1="708.0" y1="434.0" x2="812.0" y2="434.0" stroke="#ff0000" stroke-width="1" stroke-dasharray="20 3 3 3"/>
<rect x="700.5" y="365.5" width="19.0" height="16.0" fill="none" stroke="#ffffff"/>
<rect x="712.0" y="360.0" width="8.0" height="28.0" fill="none" stroke="#ffffff" rx="2"/>
<rect x="776.5" y="383.5" width="35.0" height="10.0" fill="none" stroke="#ffffff"/>
<line x1="774.0" y1="388.5" x2="820.0" y2="388.5" stroke="#ff0000" stroke-width="1"/>
<rect x="776.5" y="424.5" width="35.0" height="10.0" fill="none" stroke="#ffffff"/>
<line x1="774.0" y1="429.5" x2="820.0" y2="429.5" stroke="#ff0000" stroke-width="1"/>
<rect x="630.5" y="349.5" width="65.0" height="40.0" fill="none" stroke="#ffffff" rx="5"/>
<rect x="636.5" y="359.5" width="15.0" height="23.0" fill="none" stroke="#ffffff"/>
<rect x="651.5" y="358.5" width="29.0" height="25.0" fill="none" stroke="#ffffff"/>
<rect x="680.5" y="362.5" width="10.0" height="17.0" fill="none" stroke="#ffffff"/>
<rect x="695.5" y="363.5" width="17.0" height="15.0" fill="none" stroke="#ffffff"/>
<circle cx="649.0" cy="355.0" r="5.0" fill="none" stroke="#ffffff"/>
<line x1="642.0" y1="355.0" x2="656.0" y2="355.0" stroke="#ff0000" stroke-width="1"/>
<line x1="649.0" y1="348.0" x2="649.0" y2="362.0" stroke="#ff0000" stroke-width="1"/>
<circle cx="671.0" cy="355.0" r="5.0" fill="none" stroke="#ffffff"/>
<line x1="664.0" y1="355.0" x2="678.0" y2="355.0" stroke="#ff0000" stroke-width="1"/>
<line x1="671.0" y1="348.0" x2="671.0" y2="362.0" stroke="#ff0000" stroke-width="1"/>
<circle cx="649.0" cy="386.0" r="5.0" fill="none" stroke="#ffffff"/>
<line x1="642.0" y1="386.0" x2="656.0" y2="386.0" stroke="#ff0000" stroke-width="1"/>
<line x1="649.0" y1="379.0" x2="649.0" y2="393.0" stroke="#ff0000" stroke-width="1"/>
<circle cx="671.0" cy="386.0" r="5.0" fill="none" stroke="#ffffff"/>
<line x1="664.0" y1="386.0" x2="678.0" y2="386.0" stroke="#ff0000" stroke-width="1"/>
<line x1="671.0" y1="379.0" x2="671.0" y2="393.0" stroke="#ff0000" stroke-width="1"/>
<line x1="622.0" y1="370.5" x2="712.0" y2="370.5" stroke="#ff0000" stroke-width="1" stroke-dasharray="20 3 3 3"/>
<rect x="643.5" y="402.5" width="48.0" height="36.0" fill="none" stroke="#ffffff" rx="2"/>
<rect x="647.5" y="406.5" width="40.0" height="28.0" fill="none" stroke="#ffffff"/>
<path d="M691.5 410 L699 420 L691.5 430" fill="none" stroke="#ffffff"/>
<rect x="618.5" y="411.5" width="25.0" height="18.0" fill="none" stroke="#ffffff" rx="3"/>
<circle cx="629.5" cy="420.2" r="9.0" fill="none" stroke="#ffffff"/>
<circle cx="629.5" cy="420.2" r="6.0" fill="none" stroke="#ffffff"/>
<circle cx="629.5" cy="420.2" r="3.0" fill="none" stroke="#ffffff"/>
<rect x="605.5" y="414.5" width="13.0" height="12.0" fill="none" stroke="#ffffff"/>
<circle cx="655.0" cy="411.0" r="4.0" fill="none" stroke="#ffffff"/>
<line x1="648.0" y1="411.0" x2="662.0" y2="411.0" stroke="#ff0000" stroke-width="1"/>
<line x1="655.0" y1="404.0" x2="655.0" y2="418.0" stroke="#ff0000" stroke-width="1"/>
<circle cx="679.0" cy="411.0" r="4.0" fill="none" stroke="#ffffff"/>
<line x1="672.0" y1="411.0" x2="686.0" y2="411.0" stroke="#ff0000" stroke-width="1"/>
<line x1="679.0" y1="404.0" x2="679.0" y2="418.0" stroke="#ff0000" stroke-width="1"/>
<circle cx="655.0" cy="431.0" r="4.0" fill="none" stroke="#ffffff"/>
<line x1="648.0" y1="431.0" x2="662.0" y2="431.0" stroke="#ff0000" stroke-width="1"/>
<line x1="655.0" y1="424.0" x2="655.0" y2="438.0" stroke="#ff0000" stroke-width="1"/>
<circle cx="679.0" cy="431.0" r="4.0" fill="none" stroke="#ffffff"/>
<line x1="672.0" y1="431.0" x2="686.0" y2="431.0" stroke="#ff0000" stroke-width="1"/>
<line x1="679.0" y1="424.0" x2="679.0" y2="438.0" stroke="#ff0000" stroke-width="1"/>
<line x1="600.0" y1="420.5" x2="705.0" y2="420.5" stroke="#ff0000" stroke-width="1" stroke-dasharray="20 3 3 3"/>
<rect x="666.5" y="453.0" width="16.0" height="19.5" fill="none" stroke="#ffffff" rx="3"/>
<line x1="664.0" y1="462.5" x2="685.0" y2="462.5" stroke="#ffffff" stroke-width="1"/>
<rect x="696.5" y="462.5" width="30.0" height="16.0" fill="none" stroke="#ffffff"/>
<rect x="700.5" y="453.0" width="22.0" height="9.5" fill="none" stroke="#ffffff"/>
<rect x="703.5" y="479.0" width="16.0" height="16.5" fill="none" stroke="#ffffff"/>
<rect x="707.5" y="495.5" width="8.0" height="6.0" fill="none" stroke="#ffffff"/>
<rect x="697.0" y="501.5" width="28.5" height="5.0" fill="none" stroke="#ffffff"/>
<circle cx="701.5" cy="512.6" r="5.0" fill="none" stroke="#ffffff"/>
<line x1="693.5" y1="470.5" x2="729.5" y2="470.5" stroke="#ff0000" stroke-width="1"/>
<line x1="711.5" y1="458.5" x2="711.5" y2="482.5" stroke="#ff0000" stroke-width="1"/>
<path d="M757.5 453 V476 Q753 482 757 490 H771 Q775 482 771.5 476 V453" fill="none" stroke="#ffffff"/>
<line x1="757.5" y1="462.5" x2="771.5" y2="462.5" stroke="#ffffff" stroke-width="1"/>
<rect x="625.5" y="530.5" width="152.0" height="38.0" fill="none" stroke="#ffffff"/>
<circle cx="663.3" cy="549.6" r="5.4" fill="none" stroke="#ffffff"/>
<circle cx="701.3" cy="549.6" r="5.4" fill="none" stroke="#ffffff"/>
<circle cx="739.3" cy="549.6" r="5.4" fill="none" stroke="#ffffff"/>
<line x1="701.3" y1="123.0" x2="701.3" y2="575.0" stroke="#ff0000" stroke-width="1" stroke-dasharray="16 3 3 3"/>
<line x1="370.0" y1="123.0" x2="460.0" y2="369.0" stroke="#00ffff" stroke-width="1"/>
<line x1="449.4" y1="123.0" x2="516.5" y2="356.0" stroke="#00ffff" stroke-width="1"/>
<line x1="524.0" y1="123.0" x2="538.0" y2="160.0" stroke="#00ffff" stroke-width="1"/>
<line x1="578.5" y1="123.0" x2="642.0" y2="374.0" stroke="#00ffff" stroke-width="1"/>
<line x1="628.0" y1="123.0" x2="659.0" y2="309.0" stroke="#00ffff" stroke-width="1"/>
<line x1="669.0" y1="123.0" x2="661.0" y2="201.0" stroke="#00ffff" stroke-width="1"/>
<line x1="713.0" y1="123.0" x2="707.0" y2="270.0" stroke="#00ffff" stroke-width="1"/>
<line x1="746.4" y1="123.0" x2="717.0" y2="245.0" stroke="#00ffff" stroke-width="1"/>
<line x1="800.4" y1="123.0" x2="750.0" y2="312.0" stroke="#00ffff" stroke-width="1"/>
<line x1="832.5" y1="123.0" x2="746.4" y2="343.0" stroke="#00ffff" stroke-width="1"/>
<line x1="885.0" y1="123.0" x2="748.0" y2="374.0" stroke="#00ffff" stroke-width="1"/>
<line x1="945.3" y1="123.0" x2="748.0" y2="407.0" stroke="#00ffff" stroke-width="1"/>
<line x1="1005.7" y1="123.0" x2="766.3" y2="435.5" stroke="#00ffff" stroke-width="1"/>
<line x1="1025.0" y1="209.6" x2="939.0" y2="338.0" stroke="#00ffff" stroke-width="1"/>
<line x1="362.0" y1="141.5" x2="423.5" y2="141.5" stroke="#00ffff" stroke-width="1"/>
<line x1="365.5" y1="141.5" x2="365.5" y2="530.0" stroke="#00ffff" stroke-width="1"/>
<line x1="362.0" y1="530.0" x2="423.5" y2="530.0" stroke="#00ffff" stroke-width="1"/>
<line x1="406.8" y1="469.0" x2="406.8" y2="581.0" stroke="#00ffff" stroke-width="1"/>
<line x1="423.5" y1="530.0" x2="423.5" y2="581.0" stroke="#00ffff" stroke-width="1"/>
<line x1="979.5" y1="530.0" x2="979.5" y2="581.0" stroke="#00ffff" stroke-width="1"/>
<line x1="995.5" y1="469.0" x2="995.5" y2="581.0" stroke="#00ffff" stroke-width="1"/>
<path d="M730 237.5 H753" fill="none" stroke="#00ffff"/>
<path d="M730 237.5 Q722 240 717 245" fill="none" stroke="#00ffff"/>
<text x="733.0" y="235.5" fill="#00ff00" stroke="#00ff00" stroke-width="0.25" font-size="7.5" font-family="Liberation Sans" font-weight="bold" textLength="16" lengthAdjust="spacingAndGlyphs">轨道</text>
<path d="M584 284.5 H600" fill="none" stroke="#00ffff"/>
<text x="584.0" y="283.0" fill="#00ff00" stroke="#00ff00" stroke-width="0.25" font-size="7.5" font-family="Liberation Sans" font-weight="bold" textLength="16" lengthAdjust="spacingAndGlyphs">制动</text>
<path d="M599 285 L613 272" fill="none" stroke="#00ffff"/>
<text x="807.0" y="401.0" fill="#00ff00" stroke="#00ff00" stroke-width="0.25" font-size="7.5" font-family="Liberation Sans" font-weight="bold" textLength="30" lengthAdjust="spacingAndGlyphs">换向阀组</text>
<path d="M800.4 390.3 L804.3 402.3 H839.4" fill="none" stroke="#00ffff"/>
<text x="807.0" y="442.0" fill="#00ff00" stroke="#00ff00" stroke-width="0.25" font-size="7.5" font-family="Liberation Sans" font-weight="bold" textLength="30" lengthAdjust="spacingAndGlyphs">控制阀组</text>
<path d="M801.4 429.6 L803.3 444.2 H839.4" fill="none" stroke="#00ffff"/>
<text x="800.0" y="563.0" fill="#00ff00" stroke="#00ff00" stroke-width="0.25" font-size="7.5" font-family="Liberation Sans" font-weight="bold"></text>
<text x="0" y="0" fill="#00ff00" stroke="#00ff00" stroke-width="0.5" font-size="7.5" font-weight="bold" font-family="Liberation Sans" textLength="10" lengthAdjust="spacingAndGlyphs" transform="translate(363.5 340.5) rotate(-90)">770</text></g>
</svg>

<!-- Explorer window -->
<div id="exp" class="a"></div>
<div class="a" id="glass"></div>
<div class="a" id="capbtn"><svg class="a" style="left:0;top:0" width="104" height="21" viewBox="0 0 104 21">
<path d="M0.5 0 V14.5 Q0.5 18.5 4.5 18.5 H98 Q102 18.5 102 14.5 V0" fill="#d7e4f1" stroke="#6b7687"/>
<line x1="28.5" y1="0" x2="28.5" y2="18" stroke="#8c99aa"/><line x1="55.5" y1="0" x2="55.5" y2="18" stroke="#8c99aa"/>
<rect x="9.5" y="9.5" width="10.5" height="4" rx="1" fill="#f4f4f4" stroke="#3e4654" stroke-width="1.5"/>
<rect x="36.5" y="4.8" width="10.5" height="8.5" rx="1" fill="#f4f4f4" stroke="#3e4654" stroke-width="1.5"/>
<rect x="39.5" y="7.5" width="4.5" height="3" fill="#c8d8ea" stroke="#3e4654" stroke-width="1"/>
<path d="M76.3 6.3 L82.9 12 M82.9 6.3 L76.3 12" stroke="#3e4654" stroke-width="4.4" stroke-linecap="square"/>
<path d="M76.3 6.3 L82.9 12 M82.9 6.3 L76.3 12" stroke="#f2f2f2" stroke-width="2.2" stroke-linecap="square"/>
</svg></div>
<div class="a" id="addr"><span class="a" style="left:18px;top:4px;color:#333">..</span><div class="a" style="left:35px;top:7px;width:0;height:0;border-top:4px solid transparent;border-bottom:4px solid transparent;border-left:4px solid #000"></div><span class="a" style="left:47px;top:3px;color:#333">矿井提升机盘式制...</span><div class="a" style="left:197px;top:9px;width:0;height:0;border-left:4px solid transparent;border-right:4px solid transparent;border-top:5px solid #0a1a4a"></div></div>
<div class="a" id="refresh"><svg class="a" style="left:4px;top:3px" width="16" height="16" viewBox="0 0 16 16"><path d="M8 1 L3 7 L6 7 L4 13 L9 6 L6 6 Z" fill="#3a8ee0"/><path d="M11 4 L15 9 L12.5 9 L11 15 L9.5 15 L10.5 9 L8 9 Z" fill="#1a4fa8"/></svg></div>
<div class="a" id="search"><span class="a" style="left:9px;top:3px;color:#6d6d6d;font-style:italic">搜索 矿井...</span><div class="a" style="left:68px;top:0;width:33px;height:20px;background:linear-gradient(90deg,rgba(60,64,72,0),rgba(60,64,72,.22) 50%,rgba(60,64,72,.3))"></div><svg class="a" style="left:82px;top:2px" width="16" height="16" viewBox="0 0 16 16"><circle cx="9.5" cy="6.5" r="4" fill="none" stroke="#2b6cc0" stroke-width="2"/><path d="M7 9 L2 14" stroke="#1b4c98" stroke-width="2.5" stroke-linecap="round"/></svg></div>
<div class="a" id="menubar"><span class="a mb" style="left:10px">查看(V)</span><span class="a mb" style="left:66px">工具(T)</span><span class="a mb" style="left:121px">帮助(H)</span></div>
<div class="a" id="cmdbar"><span class="a cm" style="left:18px">中</span><div class="a arr" style="left:34px;top:14px"></div><span class="a cm" style="left:72px">共享</span><div class="a arr" style="left:101px;top:14px"></div><span class="a cm" style="left:140px">刻录</span><svg class="a" style="left:186px;top:13px" width="10" height="7" viewBox="0 0 10 7"><path d="M1 0.8 L3.8 3.5 L1 6.2 M5 0.8 L7.8 3.5 L5 6.2" fill="none" stroke="#1e395b" stroke-width="1.6"/></svg>
  <svg class="a" style="left:223px;top:9px" width="17" height="13" viewBox="0 0 17 13"><g fill="#fff" stroke="#7b8799" stroke-width="1"><rect x="1.5" y="0.5" width="3" height="3"/><rect x="1.5" y="4.5" width="3" height="3"/><rect x="1.5" y="8.5" width="3" height="3"/></g><rect x="2.5" y="1.5" width="1" height="1" fill="#3a3"/><rect x="2.5" y="5.5" width="1" height="1" fill="#d33"/><rect x="2.5" y="9.5" width="1" height="1" fill="#33d"/><g fill="#5e6b80"><rect x="6" y="1.5" width="4" height="1"/><rect x="11" y="1.5" width="4" height="1"/><rect x="6" y="5.5" width="4" height="1"/><rect x="11" y="5.5" width="4" height="1"/><rect x="6" y="9.5" width="4" height="1"/><rect x="11" y="9.5" width="4" height="1"/></g></svg><div class="a arr" style="left:250px;top:14px"></div>
  <svg class="a" style="left:278px;top:8px" width="17" height="15" viewBox="0 0 17 15"><rect x="0.5" y="0.5" width="15" height="13" fill="#f6f8fb" stroke="#5a6f88"/><rect x="1" y="1" width="9" height="2" fill="#dfe6ef"/><rect x="10.5" y="1" width="5" height="12.5" fill="#9fd0ea" stroke="#5a6f88"/></svg>
  <div class="a" style="left:314px;top:6px;width:18px;height:18px;border-radius:50%;background:radial-gradient(circle at 40% 35%,#6b9be0,#1d3f9c 70%);border:1.5px solid #7d8590;color:#fff;font:bold 12px 'Liberation Sans',sans-serif;text-align:center;line-height:15px">?</div>
</div>
<div class="a" id="content">
  <div class="a" style="left:-6px;top:10px;width:20px;height:22px;border:1px solid #dcdcdc;border-radius:3px;background:linear-gradient(#fbfbfb,#efefef)"></div>
  <div class="a" id="vscroll"><div class="a" style="left:4px;top:7px;width:0;height:0;border-left:4px solid transparent;border-right:4px solid transparent;border-bottom:4px solid #444"></div><div class="a" style="left:1px;top:19px;width:13px;height:191px;border:1px solid #9a9a9a;border-radius:2px;background:linear-gradient(90deg,#f2f2f2,#dcdcdc)"></div><div class="a" style="left:3px;top:110px;width:7px;height:7px;border-top:1px solid #555;border-bottom:1px solid #555"></div><div class="a" style="left:3px;top:113px;width:7px;height:1px;background:#555"></div><div class="a" style="left:4px;top:323px;width:0;height:0;border-left:4px solid transparent;border-right:4px solid transparent;border-top:4px solid #444"></div></div>
  <div class="a" style="left:31px;top:0;width:3px;height:334px;background:#e9eef5;border-left:1px solid #d2dbe6"></div>
  <div class="a" id="colhdr"><span class="a" style="left:17px;top:6px;color:#4c607a">名称</span><div class="a" style="left:137px;top:1px;width:0;height:0;border-left:4px solid transparent;border-right:4px solid transparent;border-bottom:4px solid #a9c2dc"></div><div class="a" style="left:255px;top:0;width:1px;height:25px;background:#e2e8f0"></div><div class="a" style="left:259px;top:11px;width:0;height:0;border-left:4px solid transparent;border-right:4px solid transparent;border-top:5px solid #3c4f66"></div><div class="a" style="left:272px;top:0;width:1px;height:25px;background:#e2e8f0"></div><span class="a" style="left:278px;top:6px;color:#4c607a">修改</span></div>
  <div class="a" id="hscroll"><div class="a" style="left:5px;top:3px;width:0;height:0;border-top:4px solid transparent;border-bottom:4px solid transparent;border-right:4px solid #444"></div><div class="a" style="left:18px;top:1px;width:123px;height:13px;border:1px solid #9a9a9a;border-radius:2px;background:linear-gradient(#f2f2f2,#d8d8d8)"></div><div class="a" style="left:76px;top:4px;width:7px;height:6px;border-left:1px solid #555;border-right:1px solid #555"></div><div class="a" style="left:79px;top:4px;width:1px;height:6px;background:#555"></div><div class="a" style="left:283px;top:3px;width:0;height:0;border-top:4px solid transparent;border-bottom:4px solid transparent;border-left:4px solid #444"></div></div>
</div>
<svg class="a" style="left:53px;top:243px" width="16" height="18" viewBox="0 0 16 18"><path d="M1.5 1.5 H11 L14.5 5 V16.5 H1.5 Z" fill="#fafafa" stroke="#8a8a8a"/><path d="M1.5 16.5 H14.5 V5" fill="none" stroke="#6a6a6a"/><path d="M11 1.5 V5 H14.5" fill="#e8e8e8" stroke="#9a9a9a"/><rect x="4" y="8" width="8" height="5" fill="url(#gg)"/><path d="M4.5 8.5 L6.5 4 L8.5 8.5 M5.2 7 H7.8" fill="none" stroke="#e8202a" stroke-width="1.6"/></svg><div class="a fn" style="left:72px;top:244px">集成阀板A1</div><div class="a fd" style="left:312px;top:244px">20</div>
<svg class="a" style="left:53px;top:264px" width="16" height="18" viewBox="0 0 16 18"><path d="M1.5 1.5 H11 M14.5 5 V16.5 H1.5 V1.5" fill="none" stroke="#f08c28"/><path d="M11.5 1 L15 4.5 H11.5 Z" fill="#f08c28"/><path d="M9.8 6.2 A2.6 2.6 0 1 0 10 9.4 H8" fill="none" stroke="#f08c28" stroke-width="1.5"/><text x="8" y="15.2" font-size="5" font-weight="bold" fill="#f08c28" text-anchor="middle" font-family="Liberation Sans">PDF</text></svg><div class="a fn" style="left:72px;top:265px">矿井提升机盘式制动器的整体设计及仿真</div><div class="a fd" style="left:312px;top:265px">20</div>
<svg class="a" style="left:53px;top:285px" width="16" height="18" viewBox="0 0 16 18"><path d="M1.5 1.5 H11 L14.5 5 V16.5 H1.5 Z" fill="#fafafa" stroke="#8a8a8a"/><path d="M1.5 16.5 H14.5 V5" fill="none" stroke="#6a6a6a"/><path d="M11 1.5 V5 H14.5" fill="#e8e8e8" stroke="#9a9a9a"/><rect x="4" y="8" width="8" height="5" fill="url(#gg)"/><path d="M4.5 8.5 L6.5 4 L8.5 8.5 M5.2 7 H7.8" fill="none" stroke="#e8202a" stroke-width="1.6"/></svg><div class="a fn" style="left:72px;top:286px">盘形闸结构图A1</div><div class="a fd" style="left:312px;top:286px">20</div>
<svg class="a" style="left:53px;top:306px" width="16" height="18" viewBox="0 0 16 18"><path d="M1.5 1.5 H11 L14.5 5 V16.5 H1.5 Z" fill="#fafafa" stroke="#8a8a8a"/><path d="M1.5 16.5 H14.5 V5" fill="none" stroke="#6a6a6a"/><path d="M11 1.5 V5 H14.5" fill="#e8e8e8" stroke="#9a9a9a"/><rect x="4" y="8" width="8" height="5" fill="url(#gg)"/><path d="M4.5 8.5 L6.5 4 L8.5 8.5 M5.2 7 H7.8" fill="none" stroke="#e8202a" stroke-width="1.6"/></svg><div class="a fn" style="left:72px;top:307px">盘形制动器安装示意图A2</div><div class="a fd" style="left:312px;top:307px">20</div>
<svg class="a" style="left:53px;top:327px" width="16" height="18" viewBox="0 0 16 18"><path d="M1.5 1.5 H11 L14.5 5 V16.5 H1.5 Z" fill="#fafafa" stroke="#8a8a8a"/><path d="M1.5 16.5 H14.5 V5" fill="none" stroke="#6a6a6a"/><path d="M11 1.5 V5 H14.5" fill="#e8e8e8" stroke="#9a9a9a"/><rect x="4" y="8" width="8" height="5" fill="url(#gg)"/><path d="M4.5 8.5 L6.5 4 L8.5 8.5 M5.2 7 H7.8" fill="none" stroke="#e8202a" stroke-width="1.6"/></svg><div class="a fn" style="left:72px;top:328px">液压系统原理图A2</div><div class="a fd" style="left:312px;top:328px">20</div>
<svg class="a" style="left:53px;top:348px" width="16" height="18" viewBox="0 0 16 18"><path d="M1.5 1.5 H11 L14.5 5 V16.5 H1.5 Z" fill="#fafafa" stroke="#8a8a8a"/><path d="M1.5 16.5 H14.5 V5" fill="none" stroke="#6a6a6a"/><path d="M11 1.5 V5 H14.5" fill="#e8e8e8" stroke="#9a9a9a"/><rect x="4" y="8" width="8" height="5" fill="url(#gg)"/><path d="M4.5 8.5 L6.5 4 L8.5 8.5 M5.2 7 H7.8" fill="none" stroke="#e8202a" stroke-width="1.6"/></svg><div class="a fn" style="left:72px;top:349px">液压站总装A0</div><div class="a fd" style="left:312px;top:349px">20</div>
<svg class="a" style="left:53px;top:369px" width="16" height="18" viewBox="0 0 16 18"><path d="M1.5 1.5 H11 L14.5 5 V16.5 H1.5 Z" fill="#fafafa" stroke="#8a8a8a"/><path d="M1.5 16.5 H14.5 V5" fill="none" stroke="#6a6a6a"/><path d="M11 1.5 V5 H14.5" fill="#e8e8e8" stroke="#9a9a9a"/><rect x="4" y="8" width="8" height="5" fill="url(#gg)"/><path d="M4.5 8.5 L6.5 4 L8.5 8.5 M5.2 7 H7.8" fill="none" stroke="#e8202a" stroke-width="1.6"/></svg><div class="a fn" style="left:72px;top:370px">油缸盖A3</div><div class="a fd" style="left:312px;top:370px">20</div>
<svg class="a" style="left:53px;top:390px" width="16" height="18" viewBox="0 0 16 18"><path d="M1.5 1.5 H11 L14.5 5 V16.5 H1.5 Z" fill="#fafafa" stroke="#8a8a8a"/><path d="M1.5 16.5 H14.5 V5" fill="none" stroke="#6a6a6a"/><path d="M11 1.5 V5 H14.5" fill="#e8e8e8" stroke="#9a9a9a"/><rect x="4" y="8" width="8" height="5" fill="url(#gg)"/><path d="M4.5 8.5 L6.5 4 L8.5 8.5 M5.2 7 H7.8" fill="none" stroke="#e8202a" stroke-width="1.6"/></svg><div class="a fn" style="left:72px;top:391px">油箱装配A1</div><div class="a fd" style="left:312px;top:391px">20</div>
<svg class="a" style="left:53px;top:411px" width="16" height="18" viewBox="0 0 16 18"><path d="M1.5 1.5 H11 L14.5 5 V16.5 H1.5 Z" fill="#fafafa" stroke="#8a8a8a"/><path d="M1.5 16.5 H14.5 V5" fill="none" stroke="#6a6a6a"/><path d="M11 1.5 V5 H14.5" fill="#e8e8e8" stroke="#9a9a9a"/><rect x="4" y="8" width="8" height="5" fill="url(#gg)"/><path d="M4.5 8.5 L6.5 4 L8.5 8.5 M5.2 7 H7.8" fill="none" stroke="#e8202a" stroke-width="1.6"/></svg><div class="a fn" style="left:72px;top:412px">制动器总装A1</div><div class="a fd" style="left:312px;top:412px">20</div>
<svg class="a" style="left:53px;top:432px" width="16" height="18" viewBox="0 0 16 18"><path d="M1.5 1.5 H11 L14.5 5 V16.5 H1.5 Z" fill="#fafafa" stroke="#8a8a8a"/><path d="M1.5 16.5 H14.5 V5" fill="none" stroke="#6a6a6a"/><path d="M11 1.5 V5 H14.5" fill="#e8e8e8" stroke="#9a9a9a"/><rect x="4" y="8" width="8" height="5" fill="url(#gg)"/><path d="M4.5 8.5 L6.5 4 L8.5 8.5 M5.2 7 H7.8" fill="none" stroke="#e8202a" stroke-width="1.6"/></svg><div class="a fn" style="left:72px;top:433px">制动油缸A3</div><div class="a fd" style="left:312px;top:433px">20</div>
<svg class="a" style="left:53px;top:453px" width="16" height="18" viewBox="0 0 16 18"><path d="M1.5 1.5 H11 L14.5 5 V16.5 H1.5 Z" fill="#fafafa" stroke="#8a8a8a"/><path d="M1.5 16.5 H14.5 V5" fill="none" stroke="#6a6a6a"/><path d="M11 1.5 V5 H14.5" fill="#e8e8e8" stroke="#9a9a9a"/><rect x="4" y="8" width="8" height="5" fill="url(#gg)"/><path d="M4.5 8.5 L6.5 4 L8.5 8.5 M5.2 7 H7.8" fill="none" stroke="#e8202a" stroke-width="1.6"/></svg><div class="a fn" style="left:72px;top:454px">钟形罩A3</div><div class="a fd" style="left:312px;top:454px">20</div>
<svg class="a" style="left:53px;top:474px" width="16" height="18" viewBox="0 0 16 18"><path d="M1.5 1.5 H11 L14.5 5 V16.5 H1.5 Z" fill="#fafafa" stroke="#8a8a8a"/><path d="M1.5 16.5 H14.5 V5" fill="none" stroke="#6a6a6a"/><path d="M11 1.5 V5 H14.5" fill="#e8e8e8" stroke="#9a9a9a"/><rect x="4" y="8" width="8" height="5" fill="url(#gg)"/><path d="M4.5 8.5 L6.5 4 L8.5 8.5 M5.2 7 H7.8" fill="none" stroke="#e8202a" stroke-width="1.6"/></svg><div class="a fn" style="left:72px;top:475px">总装图A0</div><div class="a fd" style="left:312px;top:475px">20</div>
<div class="a" id="details"></div>
</body></html>
